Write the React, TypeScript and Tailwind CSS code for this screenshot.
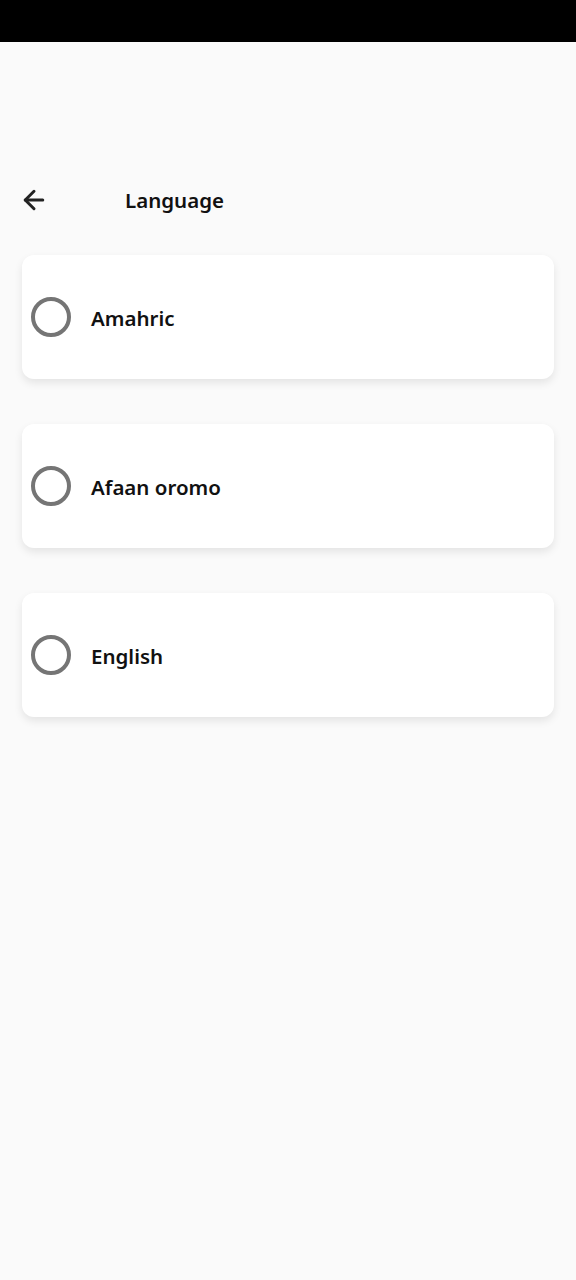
import { ArrowLeft } from 'lucide-react';

const LANGUAGES = ['Amahric', 'Afaan oromo', 'English'];

export default function App() {
  return (
    <div className="w-[576px] h-[1280px] bg-[#fafafa] flex flex-col" style={{ fontFamily: '"Noto Sans", "Open Sans", sans-serif' }}>
      {/* Status bar */}
      <div className="h-[42px] bg-black shrink-0" />

      {/* Header */}
      <div className="flex items-center h-[60px] mt-[128px] pl-[19px]">
        <ArrowLeft className="w-[30px] h-[30px] text-[#222]" strokeWidth={2.4} />
        <span className="ml-[76px] mt-[1px] text-[20.5px] font-semibold text-[#111]">Language</span>
      </div>

      {/* Options */}
      <div className="flex flex-col gap-[45px] px-[22px] mt-[25px]">
        {LANGUAGES.map((lang) => (
          <div
            key={lang}
            className="h-[124px] bg-white rounded-[12px] flex items-center pl-[9px] shadow-[0_4px_8px_rgba(0,0,0,0.09)]"
          >
            <div className="w-[40px] h-[40px] rounded-full border-[4px] border-[#757575]" />
            <span className="ml-[20px] mt-[2px] text-[20.5px] font-semibold text-[#111]">{lang}</span>
          </div>
        ))}
      </div>
    </div>
  );
}
